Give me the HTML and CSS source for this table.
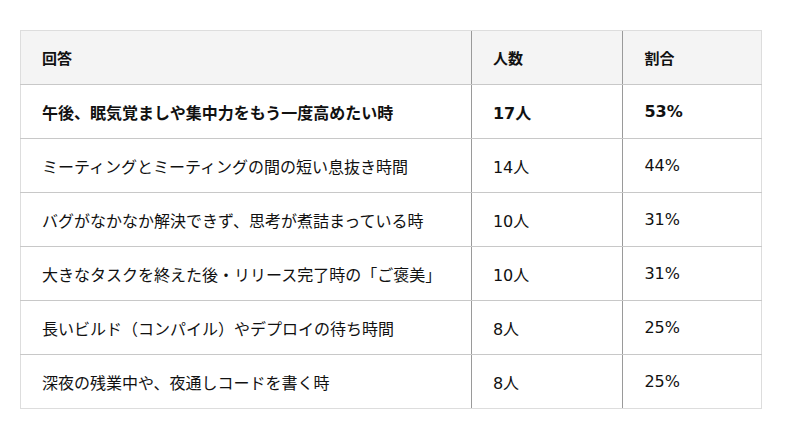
FILE: index.html
```html
<!DOCTYPE html>
<html lang="ja">
<head>
<meta charset="utf-8">
<link rel="stylesheet" href="styles.css">
</head>
<body>
<table class="survey">
  <thead>
    <tr><th class="c1">回答</th><th class="c2">人数</th><th class="c3">割合</th></tr>
  </thead>
  <tbody>
    <tr class="top"><td>午後、眠気覚ましや集中力をもう一度高めたい時</td><td>17人</td><td>53%</td></tr>
    <tr><td>ミーティングとミーティングの間の短い息抜き時間</td><td>14人</td><td>44%</td></tr>
    <tr><td>バグがなかなか解決できず、思考が煮詰まっている時</td><td>10人</td><td>31%</td></tr>
    <tr><td>大きなタスクを終えた後・リリース完了時の「ご褒美」</td><td>10人</td><td>31%</td></tr>
    <tr><td>長いビルド（コンパイル）やデプロイの待ち時間</td><td>8人</td><td>25%</td></tr>
    <tr><td>深夜の残業中や、夜通しコードを書く時</td><td>8人</td><td>25%</td></tr>
  </tbody>
</table>
</body>
</html>
```
FILE: styles.css
```css
html, body { margin: 0; padding: 0; background: #fff; }
body {
  padding: 30px 0 0 20px;
  font-family: "DejaVu Sans", "Noto Sans CJK JP", sans-serif;
  color: #111;
}
.survey {
  border-collapse: collapse;
  width: 742px;
  font-size: 16px;
  border: 1px solid #ddd;
}
.survey th, .survey td {
  height: 54px;
  box-sizing: border-box;
  padding: 0 21px;
  text-align: left;
  vertical-align: middle;
  border-top: 1px solid #c8c8c8;
  border-bottom: 1px solid #c8c8c8;
  white-space: nowrap;
}
.survey th + th, .survey td + td { border-left: 1px solid #9a9a9a; }
.survey th { background: #f4f4f4; font-weight: bold; font-size: 15px; }
.survey thead tr th { border-top: 1px solid #ddd; }
.survey tbody tr:last-child td { border-bottom: 1px solid #ddd; }
.c1 { width: 451px; }
.c2 { width: 152px; }
.c3 { width: 139px; }
.survey tr.top td { font-weight: bold; }
```
